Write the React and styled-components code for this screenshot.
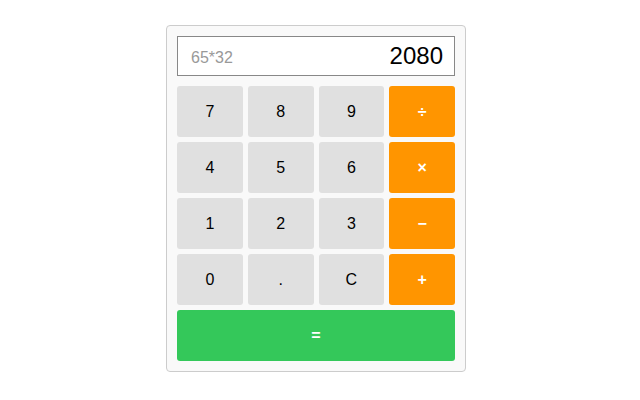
import React from "react";
import styled, { createGlobalStyle } from "styled-components";

const GlobalStyle = createGlobalStyle`
    body {
        margin: 0;
        background: #ffffff;
        font-family: "Liberation Sans", Arial, sans-serif;
    }
`;

const Page = styled.div`
    display: flex;
    justify-content: center;
    padding: 25px 8px 0 0;
`;

const Calculator = styled.div`
    width: 300px;
    box-sizing: border-box;
    padding: 10px;
    background: #f9f9f9;
    border: 1px solid #cccccc;
    border-radius: 4px;
    display: flex;
    flex-direction: column;
    gap: 10px;
`;

const Display = styled.div`
    height: 40px;
    box-sizing: border-box;
    border: 1px solid #888888;
    background: #ffffff;
    display: flex;
    align-items: center;
    justify-content: space-between;
    padding: 0 11px 0 13px;
`;

const Expression = styled.span`
    font-size: 16px;
    color: #999999;
    padding-top: 4px;
`;

const Result = styled.span`
    font-size: 24px;
    color: #000000;
`;

const Keys = styled.div`
    display: grid;
    grid-template-columns: repeat(4, 1fr);
    grid-auto-rows: 51px;
    gap: 5px;
`;

const Key = styled.button`
    border: none;
    border-radius: 3px;
    font-family: "Liberation Sans", Arial, sans-serif;
    font-size: 16px;
    padding: 0;
    cursor: pointer;
    background: ${(p) => (p.$kind === "op" ? "#ff9500" : p.$kind === "eq" ? "#34c85a" : "#e0e0e0")};
    color: ${(p) => (p.$kind === "num" ? "#000000" : "#ffffff")};
    font-weight: ${(p) => (p.$kind === "num" ? "normal" : "bold")};
    grid-column: ${(p) => (p.$kind === "eq" ? "1 / -1" : "auto")};
`;

const keys = [
    ["7", "num"], ["8", "num"], ["9", "num"], ["÷", "op"],
    ["4", "num"], ["5", "num"], ["6", "num"], ["×", "op"],
    ["1", "num"], ["2", "num"], ["3", "num"], ["−", "op"],
    ["0", "num"], [".", "num"], ["C", "num"], ["+", "op"],
    ["=", "eq"],
];

export default function App() {
    return (
        <>
            <GlobalStyle />
            <Page>
                <Calculator>
                    <Display>
                        <Expression>65*32</Expression>
                        <Result>2080</Result>
                    </Display>
                    <Keys>
                        {keys.map(([label, kind]) => (
                            <Key key={label} $kind={kind}>
                                {label}
                            </Key>
                        ))}
                    </Keys>
                </Calculator>
            </Page>
        </>
    );
}
